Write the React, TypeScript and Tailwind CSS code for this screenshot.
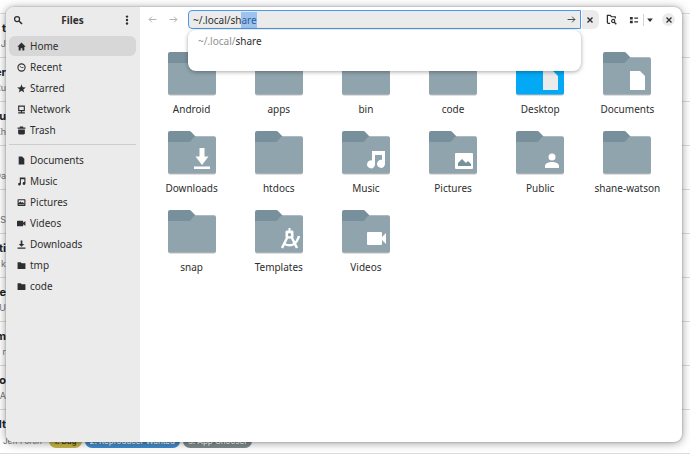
// File manager window with a location entry and its completion popover, over an issue list
import { useEffect, useRef, useState } from 'react'
import type { ReactNode } from 'react'

interface Issue {
  title: string
  author: string
  tags?: { label: string; className: string }[]
}

interface Place {
  label: string
  icon: ReactNode
}

interface Folder {
  label: string
  emblem?: ReactNode
  accent?: boolean
}

const ISSUES: Issue[] = [
  { title: 't', author: 'J' },
  { title: 'er', author: 'Ru' },
  { title: 'u', author: 'Kh' },
  { title: '', author: 'Da' },
  { title: '', author: 'S' },
  { title: 'ti', author: 'k' },
  { title: 'te', author: 'U' },
  { title: 'm', author: 'r' },
  { title: 'o', author: 'A' },
  {
    title: 'lt',
    author: 'Jeff Fortin',
    tags: [
      { label: '1. Bug', className: 'bg-[#c8b849] text-[#333333]' },
      { label: '2. Reproducer Wanted', className: 'bg-[#428bca] text-white' },
      { label: '5. App Chooser', className: 'bg-[#7f8c8d] text-white' },
    ],
  },
]

const DOC = <path d="M3 1h6l4 4v10H3z" />
const NOTE = <path d="M5 1h10v10.5a2.5 2.5 0 1 1-2-2.4V4H7v8.5a2.5 2.5 0 1 1-2-2.4z" />
const CAMERA = <path d="M1 3h9a1 1 0 0 1 1 1v2.500l4-3v9l-4-3V12a1 1 0 0 1-1 1H1a1 1 0 0 1-1-1V4a1 1 0 0 1 1-1z" />
const DOWNLOAD = <path d="M6.500 1h3v6h3.500l-5 5-5-5h3.500zM1 13.500h14v2H1z" />
const DIRECTORY = <path d="M1 2h5.500l2 2H15v10H1z" />

const PLACES: Place[] = [
  { label: 'Home', icon: <path d="M8 1 0.500 8.500H3V15h3.500v-4h3v4H13V8.500h2.500z" /> },
  {
    label: 'Recent',
    icon: (
      <>
        <circle cx="8" cy="8" r="6.400" fill="none" stroke="currentColor" strokeWidth="2" />
        <path d="M4.500 5.500 8 8h3.500" fill="none" stroke="currentColor" strokeWidth="1.500" />
      </>
    ),
  },
  { label: 'Starred', icon: <path d="m8 .5 2 5.300 5.700.3-4.400 3.500 1.500 5.500L8 12l-4.800 3.100 1.500-5.500L.3 6.100 6 5.800z" /> },
  {
    label: 'Network',
    icon: (
      <>
        <path d="M3 2h10v8H3z" fill="none" stroke="currentColor" strokeWidth="2" />
        <path d="M7 10h2v3h5v2H2v-2h5z" />
      </>
    ),
  },
  { label: 'Trash', icon: <path d="M5 1h6v1.500h4V5H1V2.500h4zM2 6h12v7a2 2 0 0 1-2 2H4a2 2 0 0 1-2-2z" /> },
]

const BOOKMARKS: Place[] = [
  { label: 'Documents', icon: DOC },
  { label: 'Music', icon: NOTE },
  {
    label: 'Pictures',
    icon: <path fillRule="evenodd" d="M2 2h12a1 1 0 0 1 1 1v10a1 1 0 0 1-1 1H2a1 1 0 0 1-1-1V3a1 1 0 0 1 1-1zm1 2v5l3-3 2.500 2.500L10 7l3 3V4zm0 7v1h10v-1z" />,
  },
  { label: 'Videos', icon: CAMERA },
  { label: 'Downloads', icon: DOWNLOAD },
  { label: 'tmp', icon: DIRECTORY },
  { label: 'code', icon: DIRECTORY },
]

const SHEET = <path d="M27 19h10l5 5v14H27z" />

const FOLDERS: Folder[] = [
  { label: 'Android' },
  { label: 'apps' },
  { label: 'bin' },
  { label: 'code' },
  { label: 'Desktop', emblem: <g fill="#ebebeb">{SHEET}</g>, accent: true },
  { label: 'Documents', emblem: SHEET },
  { label: 'Downloads', emblem: <path d="M31.500 17h5v8.500h4L34 34l-6.500-8.500h4zM26 35.500h16v2.500H26z" /> },
  { label: 'htdocs' },
  {
    label: 'Music',
    emblem: <path d="M30 20h13v13a4 4 0 1 1-3-4v-5h-7v9.500a4 4 0 1 1-3-4z" />,
  },
  {
    label: 'Pictures',
    emblem: (
      <>
        <rect x="26" y="22" width="18" height="16" rx="1" />
        <path d="M29 35v-3l4-4 4 4 2-2 3 3v2z" fill="#78909c" />
      </>
    ),
  },
  {
    label: 'Public',
    emblem: (
      <>
        <circle cx="36" cy="26" r="3.500" />
        <path d="M29 37v-2c0-3 4-4 7-4s7 1 7 4v2z" />
      </>
    ),
  },
  { label: 'shane-watson' },
  { label: 'snap' },
  {
    label: 'Templates',
    emblem: (
      <>
        <path fillRule="evenodd" d="M33.500 18h2v2.500h2l1 1V27l-1 1.500h-6l-1-1.500v-5.500l1-1h2zm1 5a1.700 1.700 0 1 0 0 3.400 1.700 1.700 0 0 0 0-3.400z" />
        <path d="m32.500 27-5.500 11M36.500 27l5.500 11M29.500 34c6 3 12 1 14.500-8" fill="none" stroke="white" strokeWidth="2.500" />
      </>
    ),
  },
  { label: 'Videos', emblem: <path d="M26 22h13a1 1 0 0 1 1 1v4l4-4v11l-4-4v4a1 1 0 0 1-1 1H26a1 1 0 0 1-1-1V23a1 1 0 0 1 1-1z" /> },
]

function Glyph({ children, className = 'size-[10px]' }: { children: ReactNode; className?: string }) {
  return (
    <svg viewBox="0 0 16 16" fill="currentColor" className={`${className} shrink-0`} aria-hidden="true">
      {children}
    </svg>
  )
}

// Folder drawing with an optional white emblem in its lower right corner
function FolderIcon({ emblem, accent }: { emblem?: ReactNode; accent?: boolean }) {
  return (
    <svg viewBox="0 0 48 44" className="h-[44px] w-[48px]" aria-hidden="true">
      <path d="M0 12v29.500a2 2 0 0 0 2 2h44a2 2 0 0 0 2-2V12z" fill="#000000" opacity=".25" />
      <path d="M2 0h19.500a2 2 0 0 1 1.500.7L28 6l-5 7H0V2a2 2 0 0 1 2-2z" fill={accent ? '#0288d1' : '#78909c'} />
      <path d="M0 11h20.500a3 3 0 0 0 2-.8L26 6a3 3 0 0 1 2-.8h18a2 2 0 0 1 2 2V40.500a2 2 0 0 1-2 2H2a2 2 0 0 1-2-2z" fill={accent ? '#03a9f4' : '#90a4ae'} />
      <g fill="white">{emblem}</g>
    </svg>
  )
}

function PlaceList({ places, current, onSelect }: { places: Place[]; current: string; onSelect: (label: string) => void }) {
  return (
    <ul className="flex flex-col gap-px">
      {places.map(p => (
        <li key={p.label}>
          <button
            onClick={() => onSelect(p.label)}
            className={`flex h-5 w-full items-center gap-1 rounded-md px-2 text-left ${p.label === current ? 'bg-[#d7d7d7]' : ''}`}
          >
            <Glyph className="size-[9px]">{p.icon}</Glyph>
            <span>{p.label}</span>
          </button>
        </li>
      ))}
    </ul>
  )
}

// Rows behind the window; text ends at the window edge unless the row carries tags
function IssueList() {
  return (
    <ul className="flex flex-col pt-[13px] font-['Inter',sans-serif]">
      {ISSUES.map((issue, i) => (
        <li key={i} className="flex h-11 flex-col border-t border-[#dcdcdc] pt-1.5">
          <p className="flex h-4 w-1.5 justify-end text-[11px] leading-4 font-bold text-[#222222]">{issue.title}</p>
          {issue.tags ? (
            <div className="flex items-center gap-[3px] pl-[3px] text-[8px] leading-[18px] whitespace-nowrap text-[#777777]">
              <span className="pr-1">{issue.author}</span>
              {issue.tags.map(t => (
                <span key={t.label} className={`rounded-full px-[5px] leading-[14px] font-medium ${t.className}`}>{t.label}</span>
              ))}
            </div>
          ) : (
            <p className="flex h-4 w-1.5 justify-end text-[9px] leading-4 text-[#777777]">{issue.author}</p>
          )}
        </li>
      ))}
      <li className="border-t border-[#dcdcdc]" />
    </ul>
  )
}

// Toolbar with navigation, location entry and view controls
function HeaderBar() {
  const entry = useRef<HTMLInputElement>(null)
  const [path, setPath] = useState('~/.local/share')

  useEffect(() => {
    entry.current?.focus()
    entry.current?.setSelectionRange(11, 14)
  }, [])

  return (
    <header className="flex h-[25px] items-center pr-[7px] pl-2">
      <nav className="flex w-10 gap-3 text-[#aaaaaa]">
        <button aria-label="Back">
          <Glyph className="size-[9px]"><path d="M15 8H2M7 3 2 8l5 5" fill="none" stroke="currentColor" strokeWidth="1.600" /></Glyph>
        </button>
        <button aria-label="Forward">
          <Glyph className="size-[9px]"><path d="M1 8h13M9 3l5 5-5 5" fill="none" stroke="currentColor" strokeWidth="1.600" /></Glyph>
        </button>
      </nav>
      <div className="relative flex flex-1 gap-px">
        <div className="flex h-[19px] flex-1 items-center rounded-l-[4px] border border-[#4a96ec] bg-[#ebebeb] px-1">
          <input
            ref={entry}
            aria-label="Location"
            value={path}
            onChange={e => setPath(e.target.value)}
            className="h-4 min-w-0 flex-1 bg-transparent caret-transparent outline-none selection:bg-[#9cc2ef] selection:text-[#2f5f93]"
          />
          <button aria-label="Go">
            <Glyph className="size-[9px]"><path d="M1 8h13M9 3l5 5-5 5" fill="none" stroke="currentColor" strokeWidth="1.500" /></Glyph>
          </button>
        </div>
        <button aria-label="Clear location" className="flex w-[17px] items-center justify-center rounded-r-md bg-[#ebebeb] pr-0.5">
          <Glyph className="size-[8px]"><path d="m3 3 10 10M13 3 3 13" stroke="currentColor" strokeWidth="2.800" /></Glyph>
        </button>
        <div className="absolute top-full right-[18px] left-0 mt-px h-[41px] rounded-lg bg-white px-2.5 pt-[3px] shadow-[0_1px_4px_rgba(0,0,0,0.35)]">
          <span className="text-[#929292]">~/.local/</span>share
        </div>
      </div>
      <div className="flex items-center">
        <button aria-label="Search current folder" className="ml-[7px] flex w-[11px]">
          <Glyph className="size-[11px]">
            <path d="M6 13.500H3.500a1.500 1.500 0 0 1-1.500-1.500V2h4l2 2h5.500v2.500" fill="none" stroke="currentColor" strokeWidth="1.800" />
            <circle cx="10.500" cy="10.200" r="2.300" fill="none" stroke="currentColor" strokeWidth="1.700" />
            <path d="m12 12 3 3" stroke="currentColor" strokeWidth="2" />
          </Glyph>
        </button>
        <button aria-label="View as list" className="ml-3 flex w-[10px]">
          <Glyph><path d="M1.500 3h4.500v4H1.500zM1.500 9h4.500v4H1.500zM8.500 4h6v2h-6zM8.500 10h6v2h-6z" /></Glyph>
        </button>
        <span className="ml-1 h-3 w-px bg-[#d4d4d4]" />
        <button aria-label="View options" className="ml-px flex w-[10px]">
          <Glyph><path d="M3.500 5.500h9L8 11z" /></Glyph>
        </button>
        <button aria-label="Close" className="ml-[7px] flex size-[13px] items-center justify-center rounded-full bg-[#ebebeb]">
          <Glyph className="size-[8px]"><path d="m3 3 10 10M13 3 3 13" stroke="currentColor" strokeWidth="2.500" /></Glyph>
        </button>
      </div>
    </header>
  )
}

export default function App() {
  const [current, setCurrent] = useState('Home')

  return (
    <div className="relative h-screen overflow-hidden bg-white">
      <IssueList />
      <main className="absolute top-[7px] right-2 bottom-[18px] left-1.5 flex overflow-hidden rounded-lg bg-white font-['Noto_Sans',sans-serif] text-[10px] leading-4 text-[#2e2e2e] shadow-[0_1px_10px_rgba(0,0,0,0.4),0_0_2px_rgba(0,0,0,0.3)]">
        <aside className="flex w-[134px] shrink-0 flex-col bg-[#ebebeb] pr-1 pl-[3px]">
          <div className="flex h-[25px] items-center justify-between px-1">
            <button aria-label="Search">
              <Glyph>
                <circle cx="6.500" cy="6.500" r="4" fill="none" stroke="currentColor" strokeWidth="2" />
                <path d="m9.500 9.500 5 5" stroke="currentColor" strokeWidth="2.500" />
              </Glyph>
            </button>
            <h1 className="font-bold">Files</h1>
            <button aria-label="Main menu">
              <Glyph>
                <circle cx="8" cy="2.500" r="1.900" />
                <circle cx="8" cy="8" r="1.900" />
                <circle cx="8" cy="13.500" r="1.900" />
              </Glyph>
            </button>
          </div>
          <div className="pt-1">
            <PlaceList places={PLACES} current={current} onSelect={setCurrent} />
            <hr className="mt-1 mb-[5px] border-[#cccccc]" />
            <PlaceList places={BOOKMARKS} current={current} onSelect={setCurrent} />
          </div>
        </aside>
        <section className="flex min-w-0 flex-1 flex-col">
          <HeaderBar />
          <ul className="grid grid-cols-6 gap-y-[14px] pt-5 pr-[11px] pl-2">
            {FOLDERS.map(f => (
              <li key={f.label} className="flex flex-col items-center gap-[5px] whitespace-nowrap">
                <FolderIcon emblem={f.emblem} accent={f.accent} />
                <span>{f.label}</span>
              </li>
            ))}
          </ul>
        </section>
      </main>
    </div>
  )
}
